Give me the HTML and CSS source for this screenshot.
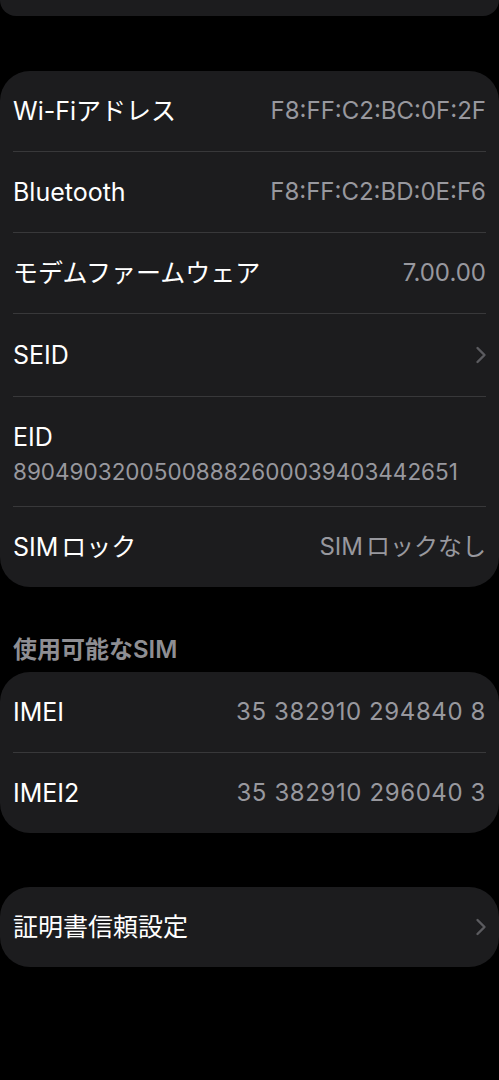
FILE: index.html
```html
<!DOCTYPE html>
<html lang="ja">
<head>
    <meta charset="UTF-8">
    <meta name="viewport" content="width=device-width, initial-scale=1.0">
    <title>情報</title>
    <link rel="stylesheet" href="styles.css">
</head>
<body>

    <!-- Previous group (scrolled off) -->
    <div class="group group-top"></div>

    <!-- Addresses -->
    <div class="group">
        <div class="row">
            <span class="label">Wi-Fiアドレス</span>
            <span class="value">F8:FF:C2:BC:0F:2F</span>
        </div>
        <div class="row">
            <span class="label">Bluetooth</span>
            <span class="value">F8:FF:C2:BD:0E:F6</span>
        </div>
        <div class="row">
            <span class="label">モデムファームウェア</span>
            <span class="value">7.00.00</span>
        </div>
        <div class="row row-link">
            <span class="label">SEID</span>
            <svg class="chevron" width="12" height="20" viewBox="0 0 12 20">
                <path d="M2.5 3 L9.5 10 L2.5 17" fill="none" stroke="currentColor" stroke-width="2.4" stroke-linecap="round" stroke-linejoin="round"/>
            </svg>
        </div>
        <div class="row row-tall">
            <span class="label">EID</span>
            <span class="sub">89049032005008882600039403442651</span>
        </div>
        <div class="row">
            <span class="label">SIM<span class="jp-gap">ロック</span></span>
            <span class="value">SIM<span class="jp-gap">ロックなし</span></span>
        </div>
    </div>

    <h3 class="section-title">使用可能なSIM</h3>

    <div class="group">
        <div class="row">
            <span class="label">IMEI</span>
            <span class="value spaced">35 382910 294840 8</span>
        </div>
        <div class="row">
            <span class="label">IMEI2</span>
            <span class="value spaced">35 382910 296040 3</span>
        </div>
    </div>

    <div class="group group-cert">
        <div class="row">
            <span class="label">証明書信頼設定</span>
            <svg class="chevron" width="12" height="20" viewBox="0 0 12 20">
                <path d="M2.5 3 L9.5 10 L2.5 17" fill="none" stroke="currentColor" stroke-width="2.4" stroke-linecap="round" stroke-linejoin="round"/>
            </svg>
        </div>
    </div>

</body>
</html>
```

FILE: styles.css
```css
body {
    margin: 0;
    background-color: #000000;
    color: #ffffff;
    font-family: Inter, "Noto Sans CJK JP", sans-serif;
    font-size: 25px;
    height: 1080px;
    overflow: hidden;
}

.group {
    background-color: #1c1c1e;
    border-radius: 30px;
}

.group-top {
    height: 16px;
    border-radius: 0 0 30px 30px;
    margin-bottom: 55px;
}

.row {
    display: flex;
    align-items: center;
    justify-content: space-between;
    height: 80px;
    margin: 0 13px;
    border-bottom: 1px solid #38383a;
    line-height: 30px;
}

.row:last-child {
    border-bottom: none;
}

.row-link {
    height: 82px;
}

.row-tall {
    height: 110px;
    box-sizing: border-box;
    flex-direction: column;
    align-items: flex-start;
    justify-content: flex-start;
    padding-top: 25px;
    gap: 7px;
}

.label {
    color: #ffffff;
}

.value,
.sub {
    color: #98989e;
    font-size: 24px;
}

.sub {
    font-size: 22.5px;
    line-height: 26px;
}

.spaced {
    letter-spacing: 0.6px;
}

.jp-gap {
    margin-left: 3px;
}

.chevron {
    color: #5b5b5f;
    margin-right: -1px;
}

.section-title {
    margin: 0;
    padding: 49px 13px 8px;
    height: 28px;
    line-height: 28px;
    font-size: 24px;
    font-weight: 600;
    color: #8e8e93;
}

.group-cert {
    margin-top: 54px;
}
```
